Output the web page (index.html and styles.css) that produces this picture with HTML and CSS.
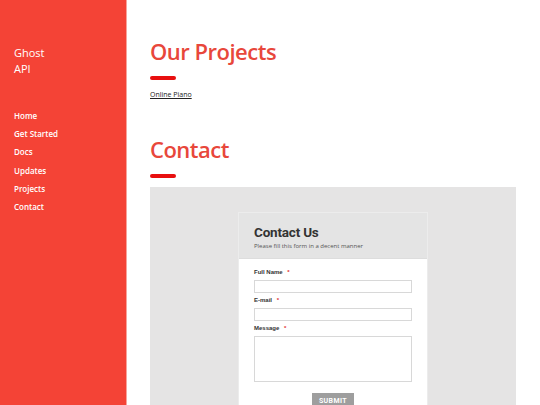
FILE: index.html
```html
<!DOCTYPE html>
<html>
<head>
<meta charset="utf-8">
<link rel="stylesheet" href="styles.css">
</head>
<body>
<div class="layout">
  <aside class="sidebar">
    <div class="brand">Ghost<br>API</div>
    <nav class="nav">
      <a href="#">Home</a>
      <a href="#">Get Started</a>
      <a href="#">Docs</a>
      <a href="#">Updates</a>
      <a href="#">Projects</a>
      <a href="#">Contact</a>
    </nav>
  </aside>
  <main class="main">
    <section class="section">
      <h1 class="title">Our Projects</h1>
      <div class="bar"></div>
      <a class="link" href="#">Online Piano</a>
    </section>
    <section class="section contact-sec">
      <h1 class="title">Contact</h1>
      <div class="bar"></div>
      <div class="form-wrap">
        <div class="card">
          <div class="card-head">
            <div class="card-title">Contact Us</div>
            <div class="card-sub">Please fill this form in a decent manner</div>
          </div>
          <div class="card-body">
            <label class="lbl">Full Name <span class="req">*</span></label>
            <div class="input"></div>
            <label class="lbl">E-mail <span class="req">*</span></label>
            <div class="input"></div>
            <label class="lbl">Message <span class="req">*</span></label>
            <div class="textarea"></div>
            <div class="btn-row"><span class="btn">SUBMIT</span></div>
          </div>
        </div>
      </div>
    </section>
  </main>
</div>
</body>
</html>
```
FILE: styles.css
```css
html, body { margin: 0; padding: 0; }
body { background: #fff; font-family: "Open Sans", "DejaVu Sans", sans-serif; overflow: hidden; height: 405px; }
.layout { display: flex; height: 405px; }
.sidebar {
  width: 127px; flex: none; background: #f44336;
  border-right: 1px solid #f7a49c;
  padding: 45px 0 0 14px; box-sizing: border-box;
  color: #fff;
}
.brand { font-size: 11px; line-height: 16px; font-weight: 500; }
.nav { display: flex; flex-direction: column; margin-top: 30px; }
.nav a { color: #fff; text-decoration: none; font-size: 8px; font-weight: 600; line-height: 18.2px; }
.main { padding: 36px 0 0 23px; flex: 1; }
.title { margin: 0; color: #e8473b; font-size: 22px; font-weight: 600; line-height: 30px; letter-spacing: -0.5px; }
.bar { width: 26px; height: 4px; border-radius: 2px; background: #e80f0f; margin-top: 10px; }
.link { display: inline-block; margin-top: 8px; font-size: 7px; color: #222; text-decoration: underline; }
.contact-sec { margin-top: 32px; }
.form-wrap { margin-top: 9px; width: 366px; height: 240px; background: #e5e4e4; padding-top: 25px; box-sizing: border-box; }
.card { width: 190px; margin-left: 88px; background: #fff; border: 1px solid #ececec; box-sizing: border-box; }
.card-head { background: #e4e4e4; padding: 10px 15px 8px; border-bottom: 1px solid #ddd; }
.card-title { font-family: "Roboto", sans-serif; font-size: 13.5px; font-weight: 700; color: #333; line-height: 18px; letter-spacing: -0.2px; }
.card-sub { font-size: 6px; color: #555; margin-top: 1px; }
.card-body { padding: 9px 15px 0; }
.lbl { display: block; font-family: "Liberation Sans", sans-serif; font-size: 6px; font-weight: 700; color: #333; line-height: 8px; }
.req { color: #e03030; margin-left: 3px; }
.input { height: 11px; border: 1px solid #d8d8d8; margin: 4px 0 3px; }
.textarea { height: 44px; border: 1px solid #d8d8d8; margin-top: 4px; }
.btn-row { display: flex; justify-content: center; margin-top: 11px; }
.btn { background: #9e9e9e; color: #fff; font-family: "Roboto", sans-serif; font-size: 7px; font-weight: 700; padding: 3px 7px; letter-spacing: 0.4px; line-height: 10px; }
```
